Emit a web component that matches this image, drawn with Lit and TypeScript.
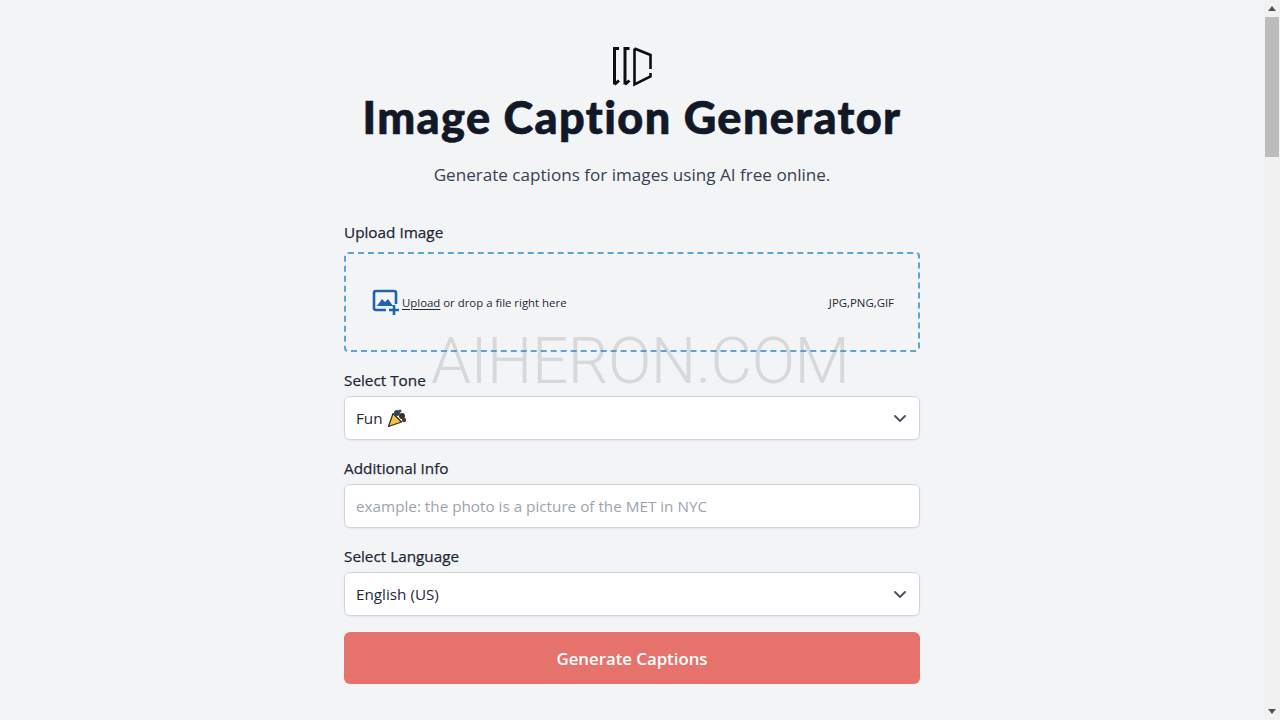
import { LitElement, html, css, svg } from "lit";
import { customElement } from "lit/decorators.js";

const chevron = svg`<svg class="chev" width="14" height="9" viewBox="0 0 14 9" fill="none"><path d="M2 2 7 7l5-5" stroke="#4b5563" stroke-width="2" stroke-linecap="round" stroke-linejoin="round"/></svg>`;

@customElement("app-root")
export class AppRoot extends LitElement {
  static styles = css`
    :host { display: flex; width: 1280px; height: 720px; overflow: hidden; background: #f3f4f6; position: relative; font-family: "Open Sans", "Noto Sans", sans-serif; color: #111827; }
    .page { flex: 1; display: flex; flex-direction: column; align-items: center; padding-top: 47px; }
    .logo { display: block; }
    h1 { margin: 0; font-family: Lato, sans-serif; font-weight: 900; font-size: 45px; line-height: 60px; letter-spacing: 1.4px; -webkit-text-stroke: 0.7px #111827; color: #111827; white-space: nowrap; }
    .sub { margin: 14px 0 0; font-size: 17.1px; line-height: 28px; color: #374151; }
    form { width: 576px; margin-top: 31px; display: flex; flex-direction: column; }
    label { display: block; font-size: 15.3px; font-weight: 500; line-height: 24px; margin-bottom: 4px; color: #1f2937; -webkit-text-stroke: 0.25px #1f2937; }
    label.first { margin-bottom: 8px; }
    .drop { height: 100px; box-sizing: border-box; border: 2px dashed #5aa5d6; border-radius: 4px; display: flex; align-items: center; justify-content: space-between; padding: 0 24px 0 26px; font-size: 11.4px; color: #1f2937; margin-bottom: 16px; }
    .drop .left { display: flex; align-items: center; gap: 2px; }
    .drop u { text-underline-offset: 2px; }
    .field { height: 44px; box-sizing: border-box; background: #fff; border: 1px solid #d1d5db; border-radius: 6px; box-shadow: 0 1px 2px rgba(0,0,0,.06); display: flex; align-items: center; justify-content: space-between; padding: 0 12px 0 11px; font-size: 15.25px; color: #1f2937; margin-bottom: 16px; }
    .field .val { display: flex; align-items: center; gap: 4px; }
    .ph { color: #9ca3af; }
    .btn { height: 52px; border: 0; border-radius: 6px; background: #e5736b; color: #fff; font: 600 16.8px "Open Sans", sans-serif; display: flex; align-items: center; justify-content: center; }
    .bar { width: 16px; background: #f1f1f1; display: flex; flex-direction: column; align-items: center; }
    .arrow { height: 17px; display: flex; align-items: center; justify-content: center; }
    .thumb { width: 14px; height: 140px; background: #bcbcbc; }
    .spacer { flex: 1; }
    .mark { position: absolute; left: 431px; top: 325px; font-family: Roboto, sans-serif; font-size: 64px; line-height: 74px; letter-spacing: -0.5px; color: rgba(120,120,120,.22); font-weight: 300; pointer-events: none; white-space: nowrap; }
  `;

  render() {
    return html`
      <div class="page">
        <svg class="logo" width="40" height="40" viewBox="0 0 40 40" fill="none" stroke="#0b0f14" stroke-width="3">
          <path d="M2.5 1.5v36M1 1.5h6M2.5 37.5l4.5-4"/>
          <path d="M13 1.5v36M11.5 1.5h6M13 37.5l4.5-4"/>
          <path d="M22.5 1.5v36l16-8V26M22.5 1.5l16 6.5v14" stroke-width="2.6"/>
        </svg>
        <h1>Image Caption Generator</h1>
        <p class="sub">Generate captions for images using AI free online.</p>
        <form>
          <label class="first">Upload Image</label>
          <div class="drop">
            <div class="left">
              <svg width="28" height="28" viewBox="0 0 28 28" fill="none">
                <path d="M14 22H4a2 2 0 0 1-2-2V5a2 2 0 0 1 2-2h18a2 2 0 0 1 2 2v11" stroke="#1e63ad" stroke-width="2.6"/>
                <path d="M5 18l5-7 3 3 3-3 5 7z" fill="#1e63ad"/>
                <path d="M22 17v10M17 22h10" stroke="#1e63ad" stroke-width="2.6"/>
              </svg>
              <span><u>Upload</u> or drop a file right here</span>
            </div>
            <span>JPG,PNG,GIF</span>
          </div>
          <label>Select Tone</label>
          <div class="field">
            <span class="val">Fun
              <svg width="20" height="20" viewBox="0 0 20 20">
                <path d="M1.5 18.5 6 5.5l8.5 8.5z" fill="#f4c23c" stroke="#2a2a2a" stroke-width="1.2" stroke-linejoin="round"/>
                <circle cx="10" cy="5" r="3" fill="#33424f"/>
                <circle cx="15" cy="8" r="3" fill="#3a2f2f"/>
                <circle cx="17" cy="12" r="2.2" fill="#6b2f2f"/>
                <circle cx="13" cy="3" r="1.6" fill="#2f5f6b"/>
              </svg>
            </span>
            ${chevron}
          </div>
          <label>Additional Info</label>
          <div class="field"><span class="ph">example: the photo is a picture of the MET in NYC</span></div>
          <label>Select Language</label>
          <div class="field"><span>English (US)</span>${chevron}</div>
          <div class="btn">Generate Captions</div>
        </form>
      </div>
      <div class="bar">
        <div class="arrow"><svg width="8" height="5" viewBox="0 0 8 5"><path d="M0 5 4 0l4 5z" fill="#505050"/></svg></div>
        <div class="thumb"></div>
        <div class="spacer"></div>
        <div class="arrow"><svg width="8" height="5" viewBox="0 0 8 5"><path d="M0 0 4 5l4-5z" fill="#505050"/></svg></div>
      </div>
      <div class="mark">AIHERON.COM</div>
    `;
  }
}
